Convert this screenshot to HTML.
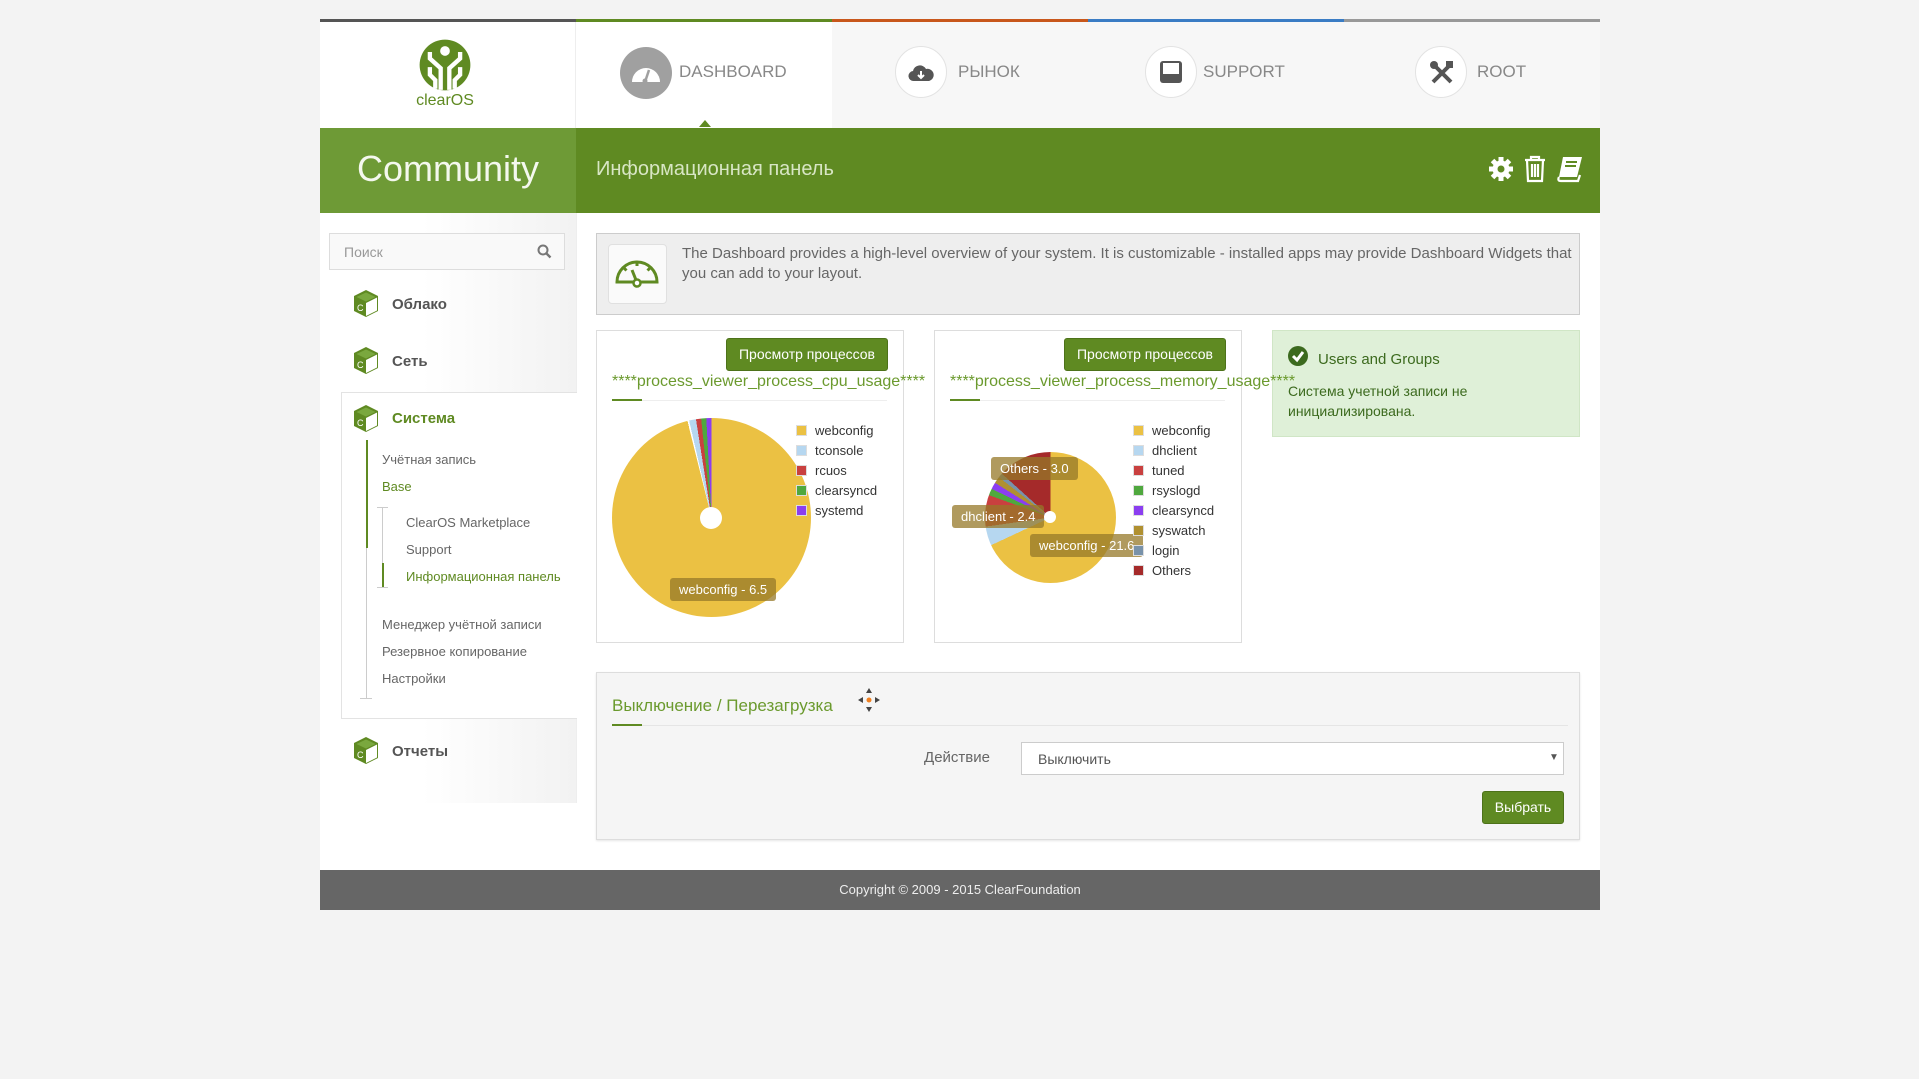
<!DOCTYPE html>
<html><head><meta charset="utf-8"><style>
*{box-sizing:border-box;margin:0;padding:0}
body{width:1919px;height:1079px;background:#f3f3f3;font-family:"Liberation Sans","DejaVu Sans",sans-serif;position:relative;overflow:hidden}
.a{position:absolute}
.wrap{left:320px;top:20px;width:1280px;height:890px;background:#fff}
.tabtxt{font-size:17px;color:#888;top:62px}
.circ{width:52px;height:52px;border-radius:50%;border:1px solid #e3e3e3;background:#fff;top:46px}
.mi{font-size:15px;font-weight:bold;color:#555}
.sub{font-size:13px;color:#666}
.box{border:1px solid #ddd;background:#fff}
.btn{background:#5f8a22;color:#fff;font-size:14px;text-align:center;border-radius:3px;border:1px solid #4d721a}
.ttl{color:#6b9a2e;font-size:16px;white-space:nowrap;z-index:5}
.leg{font-size:13px;color:#333;line-height:20px}
.leg i{display:inline-block;width:11px;height:11px;margin-right:8px;vertical-align:-1px;border:1px solid #ddd}
.lbl{background:rgba(150,120,40,.75);color:#fff;font-size:13px;padding:4px 9px;border-radius:3px;white-space:nowrap}
</style></head><body>
<div class="a wrap"></div>
<div class="a" style="left:320px;top:19px;width:256px;height:3px;background:#555"></div>
<div class="a" style="left:576px;top:19px;width:256px;height:3px;background:#5f8a22"></div>
<div class="a" style="left:832px;top:19px;width:256px;height:3px;background:#c8571b"></div>
<div class="a" style="left:1088px;top:19px;width:256px;height:3px;background:#3a7cc4"></div>
<div class="a" style="left:1344px;top:19px;width:256px;height:3px;background:#999"></div>
<div class="a" style="left:832px;top:22px;width:768px;height:106px;background:#f7f7f7"></div>
<div class="a" style="left:575px;top:22px;width:1px;height:106px;background:#eee"></div>
<svg class="a" style="left:419px;top:38px" width="52" height="54" viewBox="0 0 48 50">
<circle cx="24" cy="25" r="23.5" fill="#5f8a22"/>
<circle cx="24" cy="12" r="4.5" fill="#fff"/>
<path d="M10 13 L10 19 L20 28 L20 48 M38 13 L38 19 L28 28 L28 48" stroke="#fff" stroke-width="4" fill="none"/>
<path d="M10 27 L10 34 L15 39 L15 47 M38 27 L38 34 L33 39 L33 47" stroke="#fff" stroke-width="4" fill="none"/>
</svg>
<div class="a" style="left:414px;top:92px;width:62px;text-align:center;font-size:16px;color:#5f8a22">clearOS</div>
<div class="a" style="left:620px;top:47px;width:52px;height:52px;border-radius:50%;background:#a0a0a0"></div>
<svg class="a" style="left:630px;top:60px" width="32" height="24" viewBox="0 0 32 24"><path d="M2 22 A14 14 0 0 1 30 22 Z" fill="#fff"/><path d="M15 22 L19 10" stroke="#a0a0a0" stroke-width="2.5"/><circle cx="15" cy="21" r="2.5" fill="#a0a0a0"/></svg>
<div class="a tabtxt" style="left:679px">DASHBOARD</div>
<div class="a" style="left:699px;top:120px;width:0;height:0;border-left:6px solid transparent;border-right:6px solid transparent;border-bottom:7px solid #5f8a22"></div>
<div class="a circ" style="left:895px"></div>
<svg class="a" style="left:908px;top:63px" width="26" height="20" viewBox="0 0 26 20"><path d="M6 18 A5 5 0 0 1 5 8 A7 7 0 0 1 18 6 A6 6 0 0 1 21 18 Z" fill="#555"/><path d="M13 8 L13 14 M10 12 L13 15 L16 12" stroke="#fff" stroke-width="2" fill="none"/></svg>
<div class="a tabtxt" style="left:958px">РЫНОК</div>
<div class="a circ" style="left:1145px"></div>
<svg class="a" style="left:1159px;top:60px" width="24" height="24" viewBox="0 0 24 24"><rect x="1" y="1" width="22" height="22" rx="3" fill="#555"/><rect x="4" y="3" width="16" height="11" fill="#fff"/></svg>
<div class="a tabtxt" style="left:1203px">SUPPORT</div>
<div class="a circ" style="left:1415px"></div>
<svg class="a" style="left:1429px;top:60px" width="26" height="26" viewBox="0 0 26 26"><path d="M4 4 L22 22 M22 4 L4 22" stroke="#555" stroke-width="4"/><circle cx="5" cy="5" r="4" fill="#555"/><rect x="17" y="1" width="7" height="7" fill="#555"/></svg>
<div class="a tabtxt" style="left:1477px">ROOT</div>
<div class="a" style="left:320px;top:128px;width:1280px;height:85px;background:#5f8a22"></div>
<div class="a" style="left:320px;top:128px;width:256px;height:85px;background:#6e9a36"></div>
<div class="a" style="left:320px;top:148px;width:256px;text-align:center;font-size:36px;color:#f4f8ee">Community</div>
<div class="a" style="left:596px;top:158px;font-size:20px;color:#d8e6c4">Информационная панель</div>
<svg class="a" style="left:1488px;top:156px" width="26" height="26" viewBox="0 0 26 26"><g fill="#fff"><circle cx="13" cy="13" r="8.5"/><rect x="10.5" y="1" width="5" height="24"/><rect x="1" y="10.5" width="24" height="5"/><rect x="10.5" y="1" width="5" height="24" transform="rotate(45 13 13)"/><rect x="10.5" y="1" width="5" height="24" transform="rotate(-45 13 13)"/></g><circle cx="13" cy="13" r="3.5" fill="#5f8a22"/></svg>
<svg class="a" style="left:1524px;top:155px" width="22" height="28" viewBox="0 0 22 28"><path d="M1 5 H21 M7 5 V2 H15 V5 M3 5 L4 26 H18 L19 5 M8 9 V22 M11 9 V22 M14 9 V22" stroke="#fff" stroke-width="2.2" fill="none"/></svg>
<svg class="a" style="left:1556px;top:155px" width="28" height="28" viewBox="0 0 28 28"><path d="M7 2 H26 L21 22 H3 Z" fill="#fff"/><path d="M3 22 Q1 26 5 26 H22 L24 20" stroke="#fff" stroke-width="2.2" fill="none"/><path d="M10 7 H21 M9 11 H20" stroke="#5f8a22" stroke-width="2"/></svg>
<div class="a" style="left:320px;top:213px;width:256px;height:590px;background:linear-gradient(90deg,#fff 40%,#f2f2f2)"></div>
<div class="a" style="left:576px;top:213px;width:1px;height:590px;background:#eee"></div>
<div class="a" style="left:329px;top:233px;width:236px;height:37px;border:1px solid #ddd;background:#f9f9f9;font-size:14px;color:#999;padding:10px 14px">Поиск</div>
<svg class="a" style="left:537px;top:244px" width="15" height="15" viewBox="0 0 15 15"><circle cx="6" cy="6" r="4.5" stroke="#777" stroke-width="2" fill="none"/><path d="M9.5 9.5 L13.5 13.5" stroke="#777" stroke-width="2.4"/></svg>
<div class="a" style="left:341px;top:392px;width:236px;height:327px;border:1px solid #e3e3e3;border-right:none;background:#fff"></div>
<svg width="0" height="0" style="position:absolute"><defs><g id="cube"><path d="M14 1 L26 7 L26 22 L14 28 L2 22 L2 7 Z" fill="#5f8a22"/><path d="M14 14 L25 8.5 L25 21.5 L14 27 Z" fill="#fff"/><path d="M14 3.5 L23.5 8 L14 12.5 L4.5 8 Z" fill="#7aa83e"/><text x="5" y="22" font-size="9" fill="#fff" font-family="Liberation Sans">C</text></g></defs></svg>
<svg class="a" style="left:352px;top:289px" width="28" height="29"><use href="#cube"/></svg>
<div class="a mi" style="left:392px;top:296px">Облако</div>
<svg class="a" style="left:352px;top:346px" width="28" height="29"><use href="#cube"/></svg>
<div class="a mi" style="left:392px;top:353px">Сеть</div>
<svg class="a" style="left:352px;top:404px" width="28" height="29"><use href="#cube"/></svg>
<div class="a mi" style="left:392px;top:410px;color:#5f8a22">Система</div>
<div class="a" style="left:366px;top:440px;width:1px;height:258px;background:#ccc"></div>
<div class="a" style="left:366px;top:440px;width:2px;height:108px;background:#5f8a22"></div>
<div class="a" style="left:360px;top:698px;width:12px;height:1px;background:#ccc"></div>
<div class="a sub" style="left:382px;top:452px">Учётная запись</div>
<div class="a sub" style="left:382px;top:479px;color:#5f8a22">Base</div>
<div class="a" style="left:382px;top:507px;width:1px;height:80px;background:#ccc"></div>
<div class="a" style="left:377px;top:507px;width:11px;height:1px;background:#ccc"></div>
<div class="a" style="left:377px;top:587px;width:11px;height:1px;background:#ccc"></div>
<div class="a" style="left:382px;top:563px;width:2px;height:24px;background:#5f8a22"></div>
<div class="a sub" style="left:406px;top:515px">ClearOS Marketplace</div>
<div class="a sub" style="left:406px;top:542px">Support</div>
<div class="a sub" style="left:406px;top:569px;color:#5f8a22">Информационная панель</div>
<div class="a sub" style="left:382px;top:617px">Менеджер учётной записи</div>
<div class="a sub" style="left:382px;top:644px">Резервное копирование</div>
<div class="a sub" style="left:382px;top:671px">Настройки</div>
<svg class="a" style="left:352px;top:736px" width="28" height="29"><use href="#cube"/></svg>
<div class="a mi" style="left:392px;top:743px">Отчеты</div>
<div class="a" style="left:596px;top:233px;width:984px;height:82px;background:#eee;border:1px solid #ccc"></div>
<div class="a" style="left:608px;top:244px;width:59px;height:60px;background:#fafafa;border:1px solid #e0e0e0;border-radius:4px"></div>
<svg class="a" style="left:614px;top:256px" width="46" height="34" viewBox="0 0 46 34"><path d="M3 26 A20 20 0 0 1 43 26 Z" fill="none" stroke="#5f8a22" stroke-width="3"/><path d="M23 6 V10 M10 12 L12.5 14.5 M36 12 L33.5 14.5 M18 14 L22 24" stroke="#5f8a22" stroke-width="3"/><circle cx="23" cy="27" r="3.5" fill="#fff" stroke="#5f8a22" stroke-width="2.5"/></svg>
<div class="a" style="left:682px;top:244px;width:890px;font-size:15px;color:#666;line-height:20px">The Dashboard provides a high-level overview of your system. It is customizable - installed apps may provide Dashboard Widgets that you can add to your layout.</div>
<!-- chart boxes -->
<div class="a box" style="left:596px;top:330px;width:308px;height:313px"></div>
<div class="a box" style="left:934px;top:330px;width:308px;height:313px"></div>
<div class="a btn" style="left:726px;top:338px;width:162px;height:33px;line-height:31px">Просмотр процессов</div>
<div class="a ttl" style="left:612px;top:373px">****process_viewer_process_cpu_usage****</div>
<div class="a" style="left:612px;top:400px;width:275px;height:1px;background:#eee"></div>
<div class="a" style="left:612px;top:399px;width:30px;height:2px;background:#5f8a22"></div>
<div class="a" style="left:612px;top:418px;width:199px;height:199px;border-radius:50%;background:conic-gradient(#ebc143 0 346deg,#fff 346deg 347deg,#b6d7f0 347deg 351deg,#c9403f 351deg 354deg,#4fa83e 354deg 357deg,#8b3ef0 357deg 360deg)"></div>
<div class="a" style="left:700px;top:507px;width:22px;height:22px;border-radius:50%;background:#fff"></div>
<div class="a lbl" style="left:670px;top:578px">webconfig - 6.5</div>
<div class="a leg" style="left:796px;top:421px"><i style="background:#ebc143"></i>webconfig<br><i style="background:#b6d7f0"></i>tconsole<br><i style="background:#c9403f"></i>rcuos<br><i style="background:#4fa83e"></i>clearsyncd<br><i style="background:#8b3ef0"></i>systemd</div>
<div class="a btn" style="left:1064px;top:338px;width:162px;height:33px;line-height:31px">Просмотр процессов</div>
<div class="a ttl" style="left:950px;top:373px">****process_viewer_process_memory_usage****</div>
<div class="a" style="left:950px;top:400px;width:275px;height:1px;background:#eee"></div>
<div class="a" style="left:950px;top:399px;width:30px;height:2px;background:#5f8a22"></div>
<div class="a" style="left:985px;top:452px;width:131px;height:131px;border-radius:50%;background:conic-gradient(#ebc143 0 245deg,#b6d7f0 245deg 262deg,#c9403f 262deg 290deg,#4fa83e 290deg 296deg,#8b3ef0 296deg 302deg,#b09030 302deg 308deg,#7892aa 308deg 312deg,#a52a2a 312deg 360deg)"></div>
<div class="a" style="left:1044px;top:511px;width:12px;height:12px;border-radius:50%;background:#fff"></div>
<div class="a lbl" style="left:991px;top:457px">Others - 3.0</div>
<div class="a lbl" style="left:952px;top:505px">dhclient - 2.4</div>
<div class="a lbl" style="left:1030px;top:534px">webconfig - 21.6</div>
<div class="a leg" style="left:1133px;top:421px"><i style="background:#ebc143"></i>webconfig<br><i style="background:#b6d7f0"></i>dhclient<br><i style="background:#c9403f"></i>tuned<br><i style="background:#4fa83e"></i>rsyslogd<br><i style="background:#8b3ef0"></i>clearsyncd<br><i style="background:#b09030"></i>syswatch<br><i style="background:#7892aa"></i>login<br><i style="background:#a52a2a"></i>Others</div>
<div class="a" style="left:1272px;top:330px;width:308px;height:107px;background:#dff0d8;border:1px solid #d0e6c6"></div>
<svg class="a" style="left:1288px;top:346px" width="20" height="20" viewBox="0 0 20 20"><circle cx="10" cy="10" r="10" fill="#3c6a1e"/><path d="M5 10 L9 14 L15 6" stroke="#fff" stroke-width="3" fill="none"/></svg>
<div class="a" style="left:1318px;top:351px;font-size:15px;color:#3c6a1e">Users and Groups</div>
<div class="a" style="left:1288px;top:381px;font-size:14px;color:#3c6a1e;line-height:20px">Система учетной записи не<br>инициализирована.</div>
<div class="a" style="left:596px;top:672px;width:984px;height:168px;background:#f5f5f5;border:1px solid #ddd;box-shadow:0 1px 2px rgba(0,0,0,.1)"></div>
<div class="a ttl" style="left:612px;top:696px;font-size:17px">Выключение / Перезагрузка</div>
<svg class="a" style="left:857px;top:687px" width="24" height="26" viewBox="0 0 24 26"><path d="M12 1 L9 6 H15 Z M12 25 L9 20 H15 Z M1 13 L6 10 V16 Z M23 13 L18 10 V16 Z" fill="#444"/><circle cx="12" cy="13" r="2.5" fill="#f08020"/></svg>
<div class="a" style="left:612px;top:725px;width:956px;height:1px;background:#e5e5e5"></div>
<div class="a" style="left:612px;top:724px;width:30px;height:2px;background:#5f8a22"></div>
<div class="a" style="left:900px;top:749px;width:90px;text-align:right;font-size:15px;color:#666">Действие</div>
<div class="a" style="left:1021px;top:742px;width:543px;height:33px;background:#fff;border:1px solid #ccc;font-size:14px;color:#555;padding:8px 16px">Выключить</div>
<div class="a" style="left:1549px;top:752px;font-size:10px;color:#555">▼</div>
<div class="a btn" style="left:1482px;top:791px;width:82px;height:33px;line-height:31px">Выбрать</div>
<div class="a" style="left:320px;top:870px;width:1280px;height:40px;background:#666;color:#eee;font-size:13px;text-align:center;line-height:40px">Copyright © 2009 - 2015 ClearFoundation</div>
</body></html>
